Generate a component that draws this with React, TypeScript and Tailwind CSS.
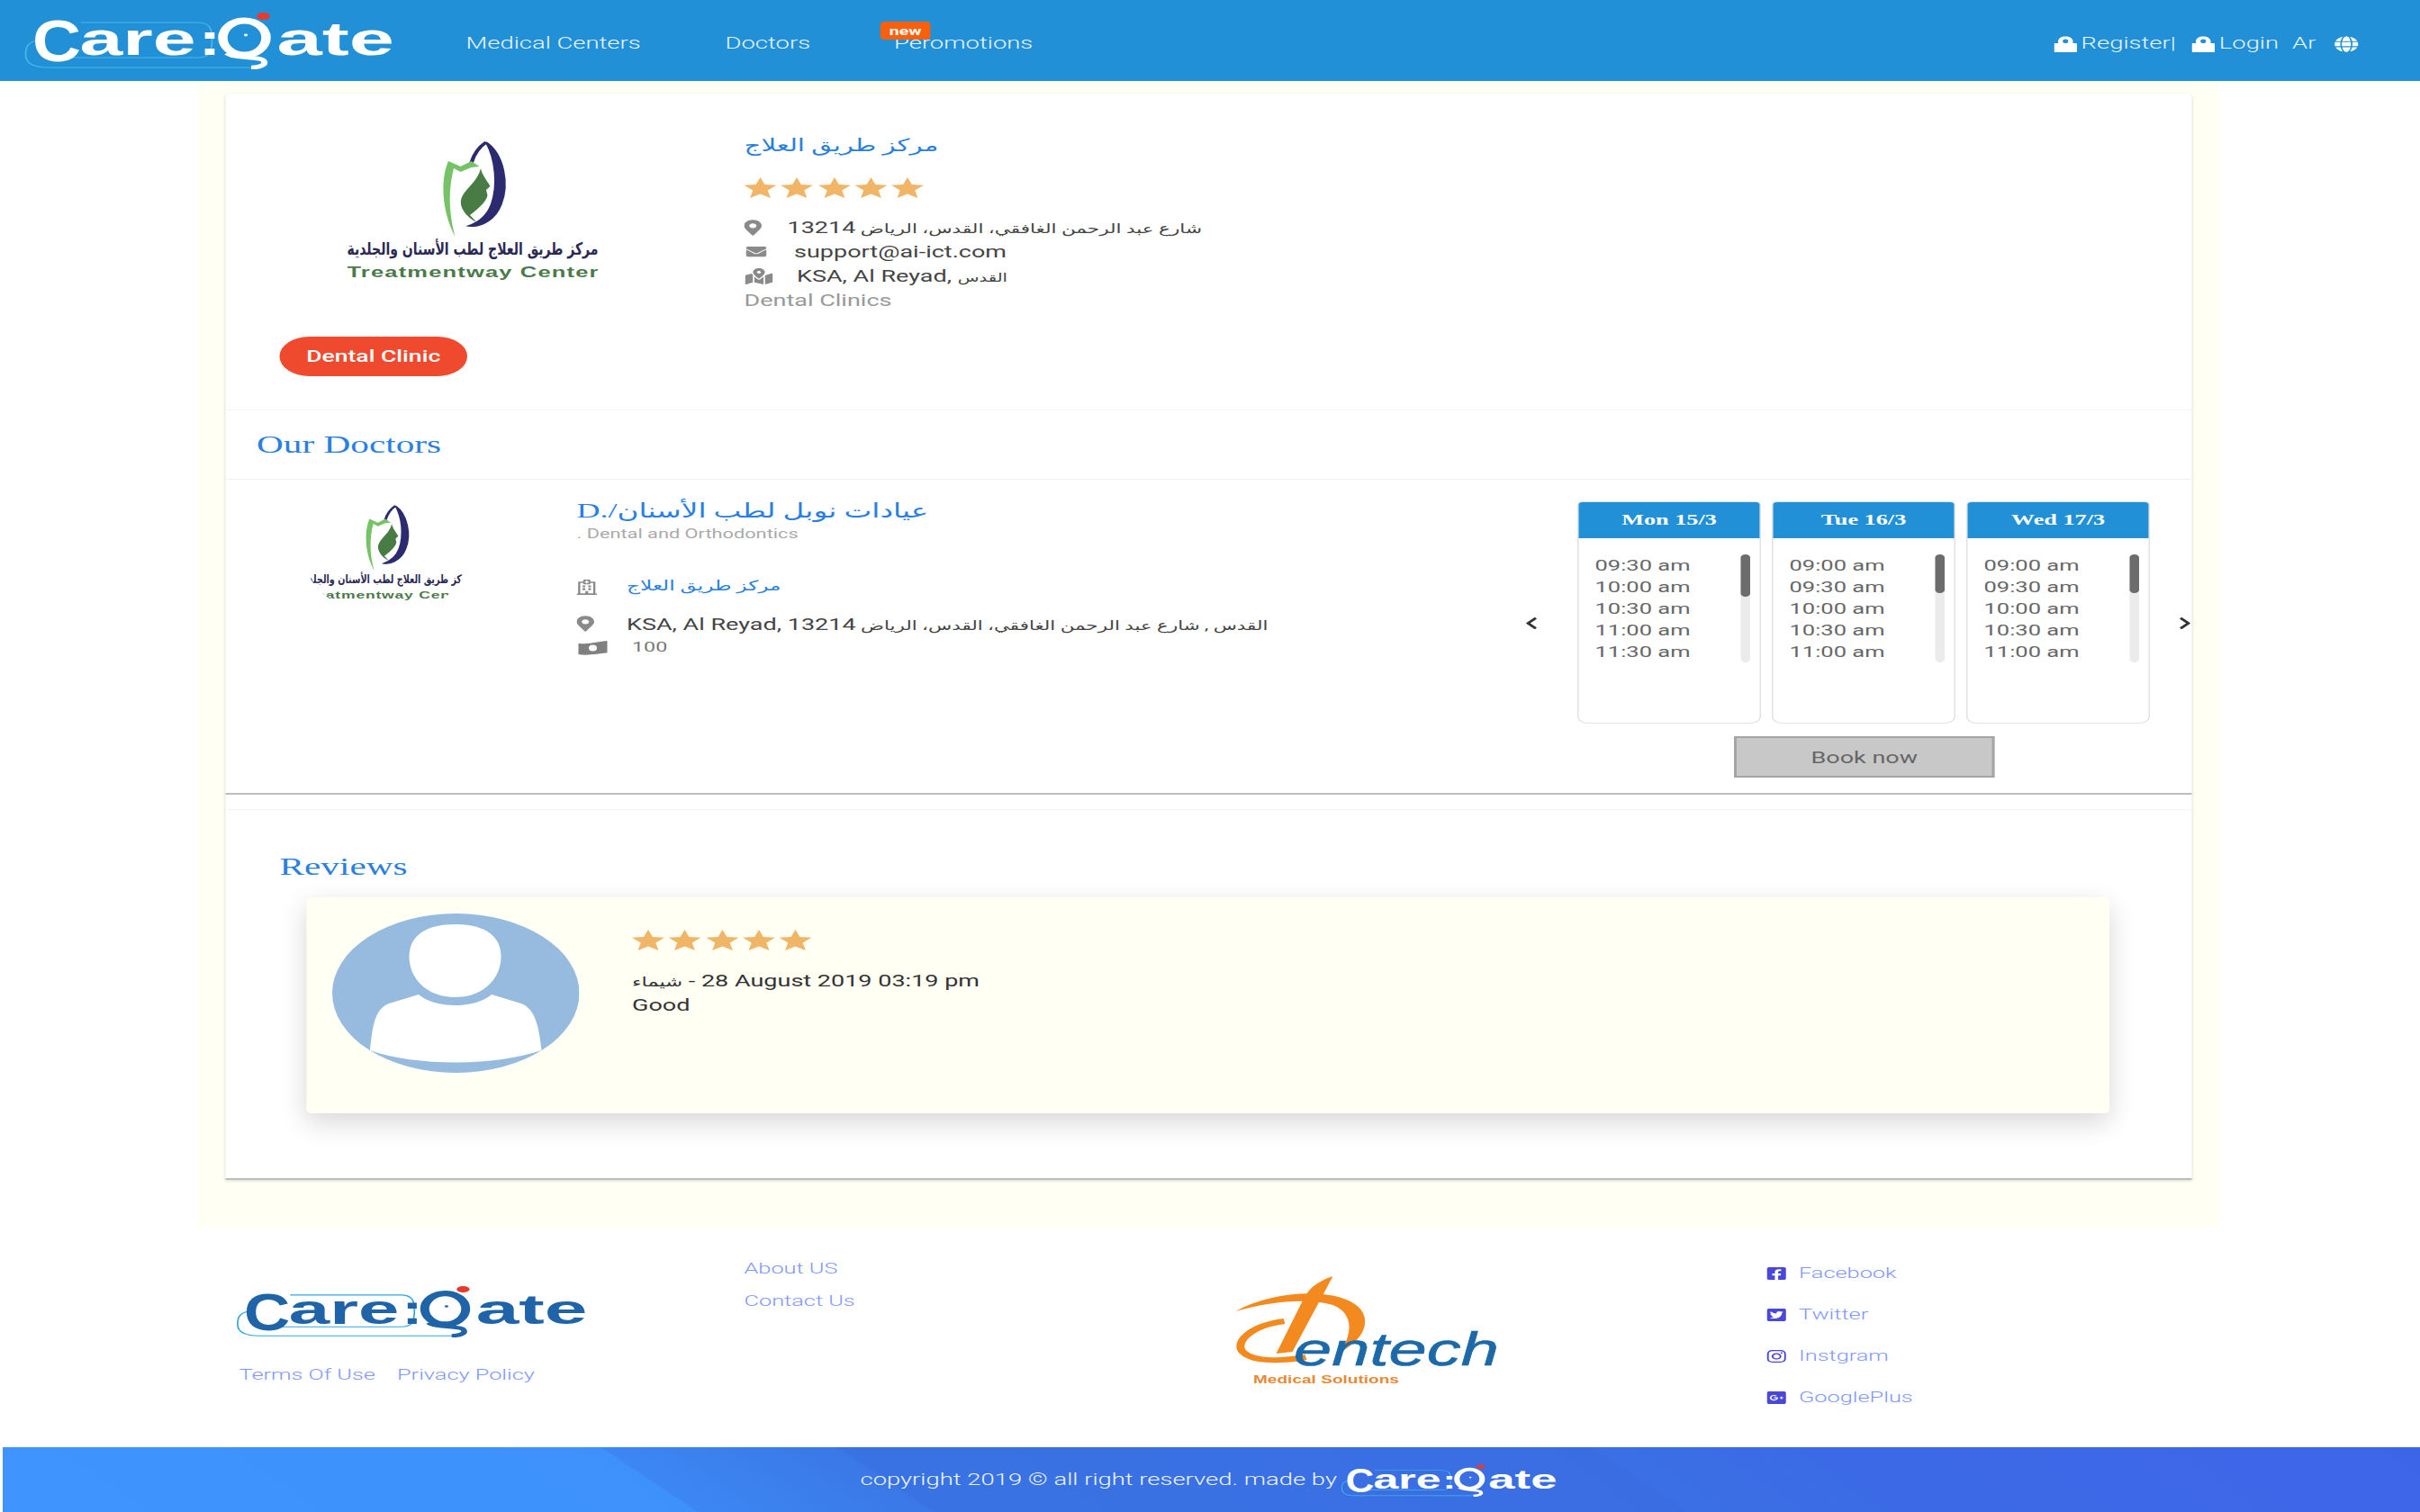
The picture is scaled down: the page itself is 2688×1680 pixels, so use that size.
import React from "react";
import {
  FaMapMarkerAlt, FaEnvelope, FaMapMarkedAlt, FaRegHospital, FaGlobe,
  FaChevronLeft, FaChevronRight, FaFacebookSquare, FaTwitterSquare, FaInstagram, FaGooglePlusSquare,
} from "react-icons/fa";

function CareGate({ className, main, line }: { className: string; main: string; line: string }) {
  return (
    <svg className={className} viewBox="18 12 274 64" fill="none" preserveAspectRatio="none">
      <path d="M28 44 C20 46 19 52 19 60 C19 70 26 74 36 74 L186 74" stroke={line} strokeWidth="1.2" />
      <path d="M60 24 L146 24 C155 24 157 30 157 42 C157 58 155 63 146 63 L50 63" stroke={line} strokeWidth="1.2" />
      <text x="24" y="67" fill={main} fontFamily="'Liberation Sans', sans-serif" fontWeight="700" fontSize="64" textLength="36" lengthAdjust="spacingAndGlyphs">C</text>
      <text x="59" y="60" fill={main} fontFamily="'Liberation Sans', sans-serif" fontWeight="700" fontSize="52" textLength="86" lengthAdjust="spacingAndGlyphs">are</text>
      <text x="147" y="60" fill={main} fontFamily="'Liberation Sans', sans-serif" fontWeight="700" fontSize="50">:</text>
      <ellipse cx="181" cy="41" rx="16" ry="19" stroke={main} strokeWidth="7" />
      <circle cx="182" cy="38" r="1.4" fill={main} />
      <path d="M168 58 C172 64 192 62 195 66 C198 71 192 74 186 74" stroke={main} strokeWidth="4.5" />
      <ellipse cx="195" cy="17" rx="5" ry="4" fill="#e8392c" />
      <text x="205" y="60" fill={main} fontFamily="'Liberation Sans', sans-serif" fontWeight="700" fontSize="52" textLength="87" lengthAdjust="spacingAndGlyphs">ate</text>
    </svg>
  );
}

function ClinicLogo({ className }: { className: string }) {
  return (
    <svg className={className} viewBox="0 0 186 160" fill="none">
      <path d="M103 3 C116 16 120 50 114 72 C110 88 100 98 90 96 C98 92 104 84 107 72 C112 50 110 22 103 3 Z" fill="#2c2b70" stroke="#2c2b70" strokeWidth="1.5" />
      <path d="M103 3 C98 8 94 16 92 26" stroke="#2c2b70" strokeWidth="3" />
      <path d="M80 108 C70 80 69 45 75 24 L84 30 L92 24 L98 30 L92 31 L84 36 L79 32 C75 55 75 80 80 108 Z" fill="#76c267" />
      <path d="M99 32 C100 40 104 46 106 52 L103 56 L104 62 C103 70 96 78 91 84 L96 92 C88 86 82 74 85 64 C88 54 97 46 99 32 Z" fill="#497c45" />
      <text x="93" y="128" textAnchor="middle" fill="#2a2a55" fontFamily="'DejaVu Sans', sans-serif" fontWeight="700" fontSize="19" textLength="186" lengthAdjust="spacingAndGlyphs">مركز طريق العلاج لطب الأسنان والجلدية</text>
      <text x="93" y="153" textAnchor="middle" fill="#4b7a4b" fontFamily="'Liberation Sans', sans-serif" fontWeight="700" fontSize="17" textLength="186" lengthAdjust="spacing">Treatmentway Center</text>
    </svg>
  );
}

function Dentech({ className }: { className: string }) {
  return (
    <svg className={className} viewBox="0 0 195 122" fill="none">
      <path d="M0 39 C25 18 62 14 82 26 C102 38 100 66 78 84 C86 64 88 42 72 32 C52 24 26 28 0 39 Z" fill="#f28a20" />
      <path d="M36 50 C10 55 -2 75 6 85 C14 96 36 94 52 90" stroke="#f28a20" strokeWidth="6" />
      <path d="M72 0 C60 6 54 14 50 26 L30 86 L42 84 Z" fill="#f28a20" />
      <text x="43" y="99" fill="#1d69a8" stroke="#1d69a8" strokeWidth="0.6" fontFamily="'Liberation Sans', sans-serif" fontStyle="italic" fontSize="52" textLength="152" lengthAdjust="spacingAndGlyphs">entech</text>
      <text x="13" y="119" fill="#e58a35" fontFamily="'Liberation Sans', sans-serif" fontWeight="700" fontSize="13" textLength="108" lengthAdjust="spacingAndGlyphs">Medical Solutions</text>
    </svg>
  );
}

function Lock({ className }: { className: string }) {
  return (
    <svg className={className} viewBox="0 0 17 18">
      <path d="M3 8 V6 C3 2.5 5.5 0.5 8.5 0.5 C11.5 0.5 14 2.5 14 6 V8 H16 C16.6 8 17 8.4 17 9 V17 C17 17.6 16.6 18 16 18 H1 C0.4 18 0 17.6 0 17 V9 C0 8.4 0.4 8 1 8 Z" fill="#fff" />
      <rect x="6.5" y="3.5" width="4" height="4.5" rx="2" fill="#2190d6" />
    </svg>
  );
}

function Money({ className }: { className: string }) {
  return (
    <svg className={className} viewBox="0 0 24 18">
      <path fillRule="evenodd" d="M0 3 C8 5 16 1 24 0 V15 C16 16 8 19 0 17 Z M12 5 A3.4 4 0 1 0 12 13 A3.4 4 0 1 0 12 5 Z" fill="#808080" />
    </svg>
  );
}

function Stars() {
  return (
    <div className="flex gap-[3.3px]">
      {[0, 1, 2, 3, 4].map((i) => (
        <svg key={i} className="w-[24px] h-[23px]" viewBox="0 0 24 23" fill="#f0b566">
          <polygon points="12,0 15.2,8 24,8.8 17.5,14.4 19.6,23 12,18.4 4.4,23 6.5,14.4 0,8.8 8.8,8" />
        </svg>
      ))}
    </div>
  );
}

function Avatar() {
  return (
    <svg className="w-[183px] h-[177px] shrink-0" viewBox="0 0 183 177">
      <ellipse cx="91.5" cy="88.5" rx="91.5" ry="88.5" fill="#97bbdf" />
      <path d="M91 12 C112 12 125 24 125 48 C125 72 112 93 91 93 C70 93 57 72 57 48 C57 24 70 12 91 12 Z" fill="#fff" />
      <path d="M28 152 C30 122 32 106 42 100 L64 90 C76 106 106 106 118 90 L140 100 C150 106 153 124 155 152 C120 170 62 170 28 152 Z" fill="#fff" />
    </svg>
  );
}

function Day({ title, times, thumb }: { title: string; times: string[]; thumb: string }) {
  return (
    <div className="w-[136px] h-[247px] border border-[#e2e2e2] rounded-b-lg rounded-t-sm overflow-hidden">
      <div className="h-[41px] -mx-px -mt-px bg-[#2190d6] flex items-center justify-center text-white text-[17.5px] font-bold font-['Liberation_Serif',serif]">{title}</div>
      <div className="flex justify-between pl-[12px] pr-[7px] pt-[18px]">
        <div className="flex flex-col text-[#666] text-[17px]">
          {times.map((t) => (
            <div key={t} className="h-[24px] leading-[24px]">{t}</div>
          ))}
        </div>
        <div className="w-[7px] h-[120px] bg-[#ebebeb] rounded">
          <div className={`w-[7px] ${thumb} bg-[#6c6c6c] rounded`} />
        </div>
      </div>
    </div>
  );
}

const ar = "font-['Roboto','DejaVu_Sans',sans-serif]";

export default function App() {
  return (
    <div className={`w-[1792px] h-[1680px] origin-top-left scale-x-150 bg-white overflow-hidden ${ar}`}>
      <header className="h-[90px] bg-[#2190d6] flex items-center text-[#e9f4fb] text-[18.3px] font-light">
        <CareGate className="w-[274px] h-[64px] ml-[18px] shrink-0" main="#ffffff" line="#45b7ea" />
        <div className="w-[192px] ml-[53px] mt-[6px] shrink-0 whitespace-nowrap">Medical Centers</div>
        <div className="w-[125px] mt-[6px] shrink-0">Doctors</div>
        <div className="relative mt-[6px] shrink-0">
          Peromotions
          <span className="absolute left-[-10px] top-[-10px] w-[37px] h-[20px] rounded-[3px] bg-[#f8600e] text-white text-[13px] font-bold flex items-center justify-center leading-none">new</span>
        </div>
        <div className="ml-auto mr-[45px] mt-[6px] flex items-center">
          <Lock className="w-[17px] h-[18px] mr-[3px] mt-[2px]" />
          <span>Register|</span>
          <Lock className="w-[17px] h-[18px] ml-[12px] mr-[3px] mt-[2px]" />
          <span>Login</span>
          <span className="ml-[10px]">Ar</span>
          <FaGlobe className="w-[19px] h-[18px] text-white ml-[13px] mt-[2px]" />
        </div>
      </header>

      <main className="w-[1496px] ml-[147px] bg-[#fffff3] px-[20px] pt-[14px] pb-[53px]">
        <div className="bg-white rounded-t shadow-[0_1px_3px_rgba(0,0,0,0.15)]">
          <section className="h-[352px] border-b border-[#f4f4f4]">
            <div className="h-[270px] flex">
              <div className="w-[384px] pl-[90px] pt-[51px] shrink-0">
                <ClinicLogo className="w-[186px] h-[160px]" />
              </div>
              <div className="pt-[42px]">
                <div className="h-[32px] leading-[32px] text-[#2a7fdb] text-[19.5px]">مركز طريق العلاج</div>
                <div className="mt-[19px]"><Stars /></div>
                <div className="mt-[19px] text-[#444] text-[18px]">
                  <div className="h-[27px] flex items-center">
                    <div className="w-[32px]"><FaMapMarkerAlt className="w-[13px] h-[18px] text-[#8a8a8a]" /></div>
                    <span className="text-[14.4px]">شارع عبد الرحمن الغافقي، القدس، الرياض <span className="text-[18px]">13214</span></span>
                  </div>
                  <div className="h-[27px] flex items-center">
                    <div className="w-[37px]"><FaEnvelope className="w-[18px] h-[15px] text-[#8a8a8a]" /></div>
                    <span>support@ai-ict.com</span>
                  </div>
                  <div className="h-[27px] flex items-center">
                    <div className="w-[39px]"><FaMapMarkedAlt className="w-[22px] h-[18px] text-[#8a8a8a]" /></div>
                    <span>KSA, Al Reyad, <span className="text-[13px]">القدس</span></span>
                  </div>
                  <div className="h-[27px] flex items-center text-[#999]">Dental Clinics</div>
                </div>
              </div>
            </div>
            <div className="ml-[40px] w-[139px] h-[44px] rounded-full bg-[#ef4a2e] text-white text-[17.7px] font-medium flex items-center justify-center">Dental Clinic</div>
          </section>

          <section className="h-[77px] pl-[23px] flex items-center border-b border-[#f2f2f2] text-[#2a7fe0] text-[27.5px] font-['Liberation_Serif',serif]">Our Doctors</section>

          <section className="h-[350px] flex border-b-2 border-[#bdbdbd]">
            <div className="w-[260px] pl-[59px] pt-[25px] shrink-0">
              <div className="w-[120px] h-[125px] rounded-[50%] overflow-hidden">
                <ClinicLogo className="w-[128px] h-[110px] -ml-[4px] mt-[2px] max-w-none" />
              </div>
            </div>
            <div className="flex-1 pt-[17px]">
              <div className="h-[34px] leading-[34px] text-[#2a7fe0] text-[24px] font-['Liberation_Serif','DejaVu_Sans',serif]"><span dir="ltr">D./</span><span className="text-[21.8px] font-['Roboto','DejaVu_Sans',sans-serif]">عيادات نوبل لطب الأسنان</span></div>
              <div className="h-[20px] leading-[20px] text-[#aaa] text-[14.5px]">. Dental and Orthodontics</div>
              <div className="mt-[36px] h-[24px] flex items-center">
                <div className="w-[37px]"><FaRegHospital className="w-[15px] h-[17px] text-[#8a8a8a]" /></div>
                <span className="text-[#2a7fdb] text-[15.5px]">مركز طريق العلاج</span>
              </div>
              <div className="mt-[17px] h-[24px] flex items-center text-[#444] text-[18px]">
                <div className="w-[37px]"><FaMapMarkerAlt className="w-[13px] h-[18px] text-[#8a8a8a]" /></div>
                <span>KSA, Al Reyad, <span className="text-[14.3px]">القدس , شارع عبد الرحمن الغافقي، القدس، الرياض <span className="text-[18px]">13214</span></span></span>
              </div>
              <div className="mt-[3px] h-[24px] flex items-center text-[#777] text-[15.5px]">
                <div className="w-[41px]"><Money className="w-[24px] h-[16px]" /></div>
                <span>100</span>
              </div>
            </div>
            <div className="w-[494px] shrink-0 pt-[24px]">
              <div className="flex items-start">
                <FaChevronLeft className="w-[10px] h-[15px] text-[#333] mt-[128px]" />
                <div className="ml-[29px] flex gap-[8px]">
                  <Day title="Mon 15/3" times={["09:30 am", "10:00 am", "10:30 am", "11:00 am", "11:30 am"]} thumb="h-[47px]" />
                  <Day title="Tue 16/3" times={["09:00 am", "09:30 am", "10:00 am", "10:30 am", "11:00 am"]} thumb="h-[43px]" />
                  <Day title="Wed 17/3" times={["09:00 am", "09:30 am", "10:00 am", "10:30 am", "11:00 am"]} thumb="h-[43px]" />
                </div>
                <FaChevronRight className="w-[10px] h-[15px] text-[#333] mt-[128px] ml-[21px]" />
              </div>
              <div className="mt-[14px] ml-[155px] w-[193px] h-[46px] bg-[#c8c8c8] border-2 border-[#a5a5a5] text-[#666] text-[18px] flex items-center justify-center">Book now</div>
            </div>
          </section>

          <section className="mt-[16px] h-[412px] border-t border-[#f4f4f4] border-b-2 border-b-[#bdbdbd] pt-[43px]">
            <div className="pl-[40px] h-[40px] leading-[40px] text-[#2a7fe0] text-[27.5px] font-['Liberation_Serif',serif]">Reviews</div>
            <div className="mt-[14px] ml-[60px] w-[1335px] h-[240px] rounded bg-[#fffff3] shadow-[0_10px_24px_rgba(0,0,0,0.16)] flex pl-[19px] pt-[18px]">
              <Avatar />
              <div className="ml-[39px] pt-[18px] text-[#333] text-[18px]">
                <Stars />
                <div className="mt-[20px] h-[27px] leading-[27px]"><bdi className="text-[15px]">شيماء</bdi> - 28 August 2019 03:19 pm</div>
                <div className="h-[27px] leading-[27px]">Good</div>
              </div>
            </div>
          </section>
        </div>
      </main>

      <footer className="h-[244px] grid grid-cols-[551px_364px_393px_1fr] text-[#7f97ff] text-[16.9px] font-light">
        <div className="pl-[175px] pt-[64px]">
          <CareGate className="w-[260px] h-[58px]" main="#1f64a8" line="#2fa8e0" />
          <div className="mt-[30px] h-[24px] flex items-center whitespace-nowrap">
            <span className="w-[119px] pl-[2px]">Terms Of Use</span>
            <span>Privacy Policy</span>
          </div>
        </div>
        <div className="pt-[28px]">
          <div className="h-[36px] flex items-center">About US</div>
          <div className="h-[36px] flex items-center">Contact Us</div>
        </div>
        <div className="pt-[54px]">
          <Dentech className="w-[195px] h-[122px]" />
        </div>
        <div className="pt-[28px]">
          <div className="h-[46px] flex items-center gap-[9px]"><FaFacebookSquare className="w-[15px] h-[16px] text-[#4a48d8]" />Facebook</div>
          <div className="h-[46px] flex items-center gap-[9px]"><FaTwitterSquare className="w-[15px] h-[16px] text-[#4a48d8]" />Twitter</div>
          <div className="h-[46px] flex items-center gap-[9px]"><FaInstagram className="w-[15px] h-[16px] text-[#4a48d8]" />Instgram</div>
          <div className="h-[46px] flex items-center gap-[9px]"><FaGooglePlusSquare className="w-[15px] h-[16px] text-[#4a48d8]" />GooglePlus</div>
        </div>
      </footer>

      <div className="h-[72px] ml-[2px] bg-[linear-gradient(45deg,#3f95fd_0%,#3e91fa_27.6%,#3c87f3_27.7%,#3a78e6_37%,#3973e3_37.1%,#3a6de2_67%,#3a6fe5_67.1%,#3c6ae6_76%,#3d65e8_100%)] flex items-center pl-[635px] text-[#eef4ff] text-[18.3px] font-light">
        <span className="whitespace-nowrap">copyright 2019 © all right reserved. made by</span>
        <CareGate className="w-[160px] h-[36px] ml-[3px] mt-[2px] shrink-0" main="#ffffff" line="#45b7ea" />
      </div>
    </div>
  );
}
